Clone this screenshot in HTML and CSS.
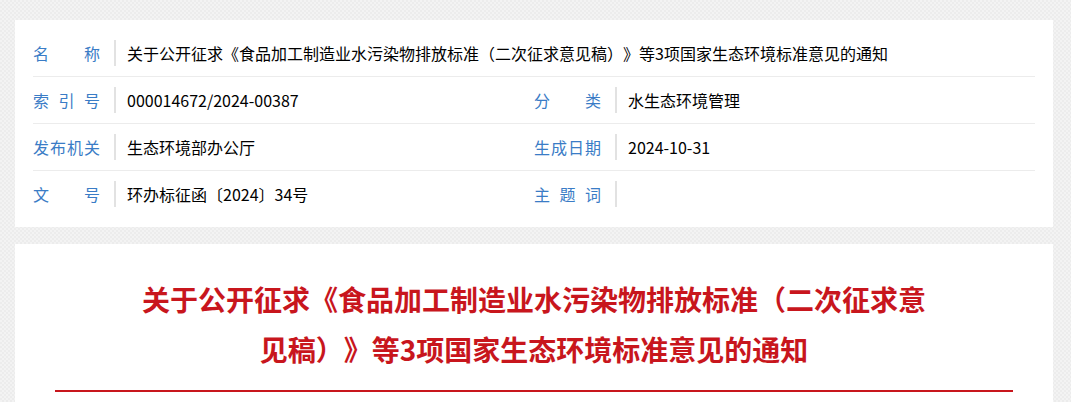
FILE: index.html
```html
<!DOCTYPE html>
<html lang="zh-CN">
<head>
    <meta charset="UTF-8">
    <meta name="viewport" content="width=device-width, initial-scale=1.0">
    <title>关于公开征求《食品加工制造业水污染物排放标准（二次征求意见稿）》等3项国家生态环境标准意见的通知</title>
    <link rel="stylesheet" href="styles.css">
</head>
<body>
    <div class="page">
        <div class="card info">
            <div class="row">
                <div class="cell full">
                    <span class="label">名称</span>
                    <span class="value">关于公开征求《食品加工制造业水污染物排放标准（二次征求意见稿）》等3项国家生态环境标准意见的通知</span>
                </div>
            </div>
            <div class="row">
                <div class="cell">
                    <span class="label">索引号</span>
                    <span class="value">000014672/2024-00387</span>
                </div>
                <div class="cell">
                    <span class="label">分类</span>
                    <span class="value">水生态环境管理</span>
                </div>
            </div>
            <div class="row">
                <div class="cell">
                    <span class="label">发布机关</span>
                    <span class="value">生态环境部办公厅</span>
                </div>
                <div class="cell">
                    <span class="label">生成日期</span>
                    <span class="value">2024-10-31</span>
                </div>
            </div>
            <div class="row last">
                <div class="cell">
                    <span class="label">文号</span>
                    <span class="value">环办标征函〔2024〕34号</span>
                </div>
                <div class="cell">
                    <span class="label">主题词</span>
                    <span class="value"></span>
                </div>
            </div>
        </div>

        <div class="card article">
            <h1 class="title">关于公开征求《食品加工制造业水污染物排放标准（二次征求意见稿）》等3项国家生态环境标准意见的通知</h1>
            <div class="title-line"></div>
        </div>
    </div>
</body>
</html>
```

FILE: styles.css
```css
body {
    margin: 0;
    font-family: 'Noto Sans CJK SC', 'Noto Sans', sans-serif;
    color: #000;
    background-color: #efefef;
    background-image: repeating-conic-gradient(#ececec 0 25%, #f3f3f3 0 50%);
    background-size: 4px 4px;
    text-spacing-trim: space-all;
}
.page {
    padding: 20px 18px 0 15px;
}
.card {
    background: white;
}
.info {
    padding: 10px 18px 10px 18px;
    margin-bottom: 17px;
}
.row {
    display: flex;
    height: 46px;
    border-bottom: 1px solid #ececec;
}
.row.last {
    border-bottom: none;
}
.cell {
    flex: 1;
    display: flex;
    align-items: center;
}
.cell.full {
    flex: 2;
}
.label {
    display: block;
    flex: none;
    width: 67px;
    color: #3a7cc6;
    font-size: 16px;
    line-height: 26px;
    height: 26px;
    text-align: justify;
    text-align-last: justify;
    text-justify: inter-character;
    padding-right: 14px;
    border-right: 2px solid #e2e2e2;
}
.value {
    font-size: 16px;
    line-height: 20px;
    padding-left: 11px;
    white-space: nowrap;
}
.article {
    padding: 30px 40px 0 40px;
    height: 200px;
}
.title {
    max-width: 800px;
    margin: 0 auto;
    color: #c8161d;
    font-size: 28px;
    font-weight: bold;
    line-height: 50px;
    text-align: center;
}
.title-line {
    margin-top: 16px;
    height: 2px;
    background: #c8161d;
}
```
